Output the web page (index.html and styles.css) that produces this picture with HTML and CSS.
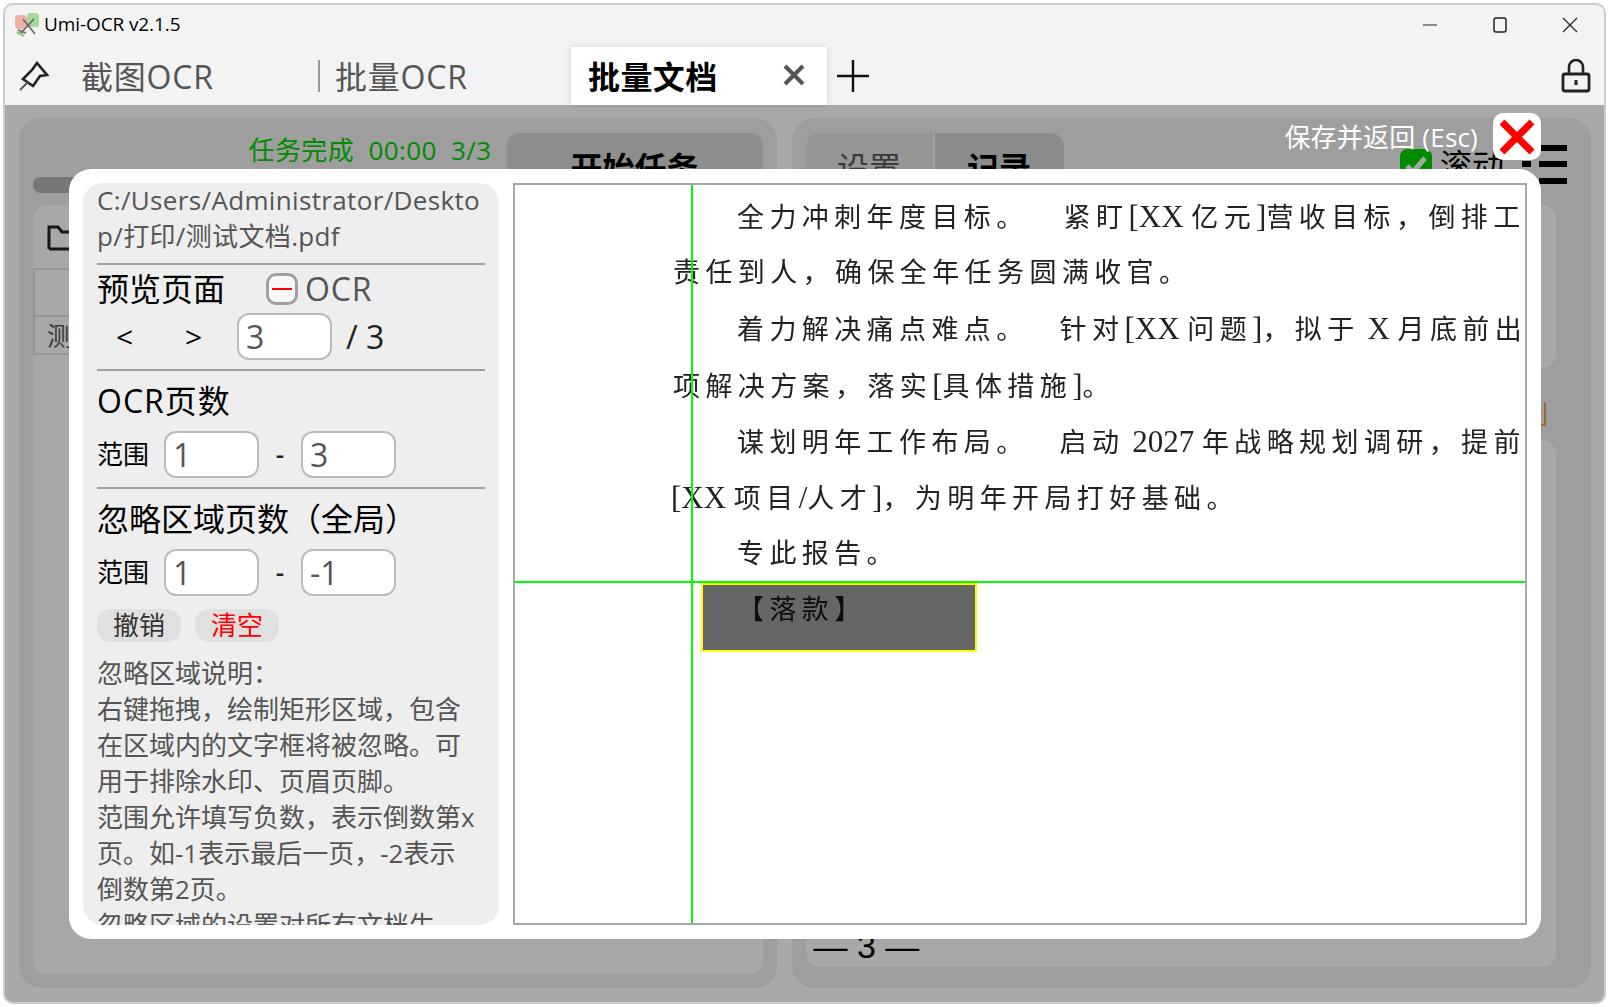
FILE: index.html
```html
<!DOCTYPE html>
<html lang="zh-CN">
<head>
    <meta charset="UTF-8">
    <title>Umi-OCR v2.1.5</title>
    <link rel="stylesheet" href="styles.css">
</head>
<body>
<div class="window">
    <header class="titlebar">
        <svg class="app-icon" viewBox="0 0 24 24">
            <rect x="0" y="2" width="12" height="14" rx="4" fill="#f0b0a8"/>
            <rect x="12" y="0" width="12" height="14" rx="3" fill="#a8d89a"/>
            <path d="M5 21 L19 6 M8 6 L20 21 M3 17 L11 20" stroke="#666" stroke-width="1.6" fill="none"/>
            <path d="M2 19 L9 23" stroke="#8fc87a" stroke-width="2.4"/>
        </svg>
        <span class="app-title">Umi-OCR v2.1.5</span>
        <div class="win-controls">
            <svg viewBox="0 0 16 16"><path d="M1 8 H15" stroke="#222" stroke-width="1.2"/></svg>
            <svg viewBox="0 0 16 16"><rect x="2" y="1" width="12" height="14" rx="2" fill="none" stroke="#222" stroke-width="1.5"/></svg>
            <svg viewBox="0 0 16 16"><path d="M1 1 L15 15 M15 1 L1 15" stroke="#222" stroke-width="1.2"/></svg>
        </div>
    </header>

    <nav class="tabbar">
        <div class="pin">
            <svg viewBox="0 0 30 30"><path d="M18 2 L28 14 L21 15 L14 25 L4 18 L13 9 Z" fill="none" stroke="#222" stroke-width="2.6" stroke-linejoin="miter"/><path d="M9 21 L1 29" stroke="#555" stroke-width="2"/></svg>
        </div>
        <div class="tab tab-first">截图OCR</div>
        <div class="tab tab-second">批量OCR</div>
        <div class="tab tab-active">
            <span>批量文档</span>
            <svg class="tab-close" viewBox="0 0 24 24"><path d="M3 3 L21 21 M21 3 L3 21" stroke="#555" stroke-width="4"/></svg>
        </div>
        <svg class="tab-add" viewBox="0 0 32 32"><path d="M16 0 V32 M0 16 H32" stroke="#111" stroke-width="2.4"/></svg>
        <svg class="lock" viewBox="0 0 30 34"><path d="M8 15 V8 A7 7 0 0 1 22 8 V15" fill="none" stroke="#222" stroke-width="2.6"/><rect x="2" y="15" width="26" height="17" rx="2" fill="none" stroke="#222" stroke-width="2.8"/><rect x="13.5" y="21" width="3" height="5" fill="#222"/></svg>
    </nav>

    <main class="content">
        <section class="panel">
            <div class="task-head">
                <span class="task-status">任务完成&nbsp;&nbsp;00:00&nbsp;&nbsp;3/3</span>
                <div class="start-btn">开始任务</div>
            </div>
            <div class="scroll-pill"></div>
            <div class="file-card">
                <div class="file-head">
                    <svg class="folder" viewBox="0 0 28 26"><path d="M2 24 V2 H11 L15 7 H28 M2 24 H28" fill="none" stroke="#222" stroke-width="3"/></svg>
                </div>
                <div class="file-row"></div>
                <div class="file-row file-row-short">测试文档.pdf</div>
            </div>
        </section>

        <section class="panel panel-right">
            <div class="log-head">
                <div class="seg seg-off">设置</div>
                <div class="seg seg-on">记录</div>
                <div class="log-tools">
                    <svg class="check" viewBox="0 0 32 32"><rect width="32" height="32" rx="7" fill="#00c800"/><path d="M7 17 L13 23 L25 9" fill="none" stroke="#eee" stroke-width="5"/></svg>
                    <span class="scroll-label">滚动</span>
                    <svg class="list-icon" viewBox="0 0 45 39"><path d="M17 3 H45 M0 19 H9 M17 19 H45 M17 36 H45" stroke="#000" stroke-width="6"/></svg>
                </div>
            </div>
            <div class="log-card log-card-top"></div>
            <div class="log-gap"><span class="bracket"></span></div>
            <div class="log-card log-card-main">— 3 —</div>
        </section>
    </main>

    <div class="dim"></div>

    <div class="save-label">保存并返回 (Esc)</div>
    <div class="save-btn">
        <svg viewBox="0 0 36 36"><path d="M3 3 L33 33 M33 3 L3 33" stroke="#f00" stroke-width="7"/></svg>
    </div>

    <div class="modal">
        <aside class="side">
            <div class="path">C:/Users/Administrator/Deskto<br>p/打印/测试文档.pdf</div>
            <hr class="line line-first">
            <div class="side-row preview-head">
                <span class="big">预览页面</span>
                <span class="toggle"><i></i></span>
                <span class="big muted ocr">OCR</span>
            </div>
            <div class="side-row pager">
                <span class="arrow">&lt;</span>
                <span class="arrow arrow-next">&gt;</span>
                <input class="num" value="3">
                <span class="big of">/ 3</span>
            </div>
            <hr class="line">
            <div class="big sect sect-ocr">OCR页数</div>
            <div class="side-row range">
                <span>范围</span>
                <input class="num" value="1">
                <span class="dash">-</span>
                <input class="num" value="3">
            </div>
            <hr class="line">
            <div class="big sect">忽略区域页数（全局）</div>
            <div class="side-row range">
                <span>范围</span>
                <input class="num" value="1">
                <span class="dash">-</span>
                <input class="num" value="-1">
            </div>
            <div class="side-row actions">
                <span class="chip">撤销</span>
                <span class="chip chip-red">清空</span>
            </div>
            <p class="help">忽略区域说明：<br>右键拖拽，绘制矩形区域，包含在区域内的文字框将被忽略。可用于排除水印、页眉页脚。<br>范围允许填写负数，表示倒数第x页。如-1表示最后一页，-2表示倒数第2页。<br>忽略区域的设置对所有文档生效。</p>
        </aside>

        <div class="preview">
            <div class="page">
                <div class="indent">全力冲刺年度目标。<span class="gap gap-wide"></span>紧盯<span class="lat">[XX </span>亿元<span class="lat">]</span>营收目标，倒排工</div>
                <div>责任到人，确保全年任务圆满收官。</div>
                <div class="indent">着力解决痛点难点。<span class="gap"></span>针对<span class="lat">[XX </span>问题<span class="lat">]</span>，拟于<span class="lat"> X </span>月底前出</div>
                <div>项解决方案，落实<span class="lat">[</span>具体措施<span class="lat">]</span>。</div>
                <div class="indent">谋划明年工作布局。<span class="gap"></span>启动<span class="lat"> 2027 </span>年战略规划调研，提前布</div>
                <div class="bracket-line"><span class="lat">[XX </span>项目<span class="lat">/</span>人才<span class="lat">]</span>，为明年开局打好基础。</div>
                <div class="indent">专此报告。</div>
                <div class="indent sign">【落款】</div>
            </div>
            <div class="cross-v"></div>
            <div class="cross-h"></div>
            <div class="ignore-box"></div>
        </div>
    </div>
</div>
</body>
</html>
```

FILE: styles.css
```css
* { box-sizing: border-box; }
body {
    margin: 0;
    height: 1007px;
    background: #fff;
    overflow: hidden;
    font-family: "Open Sans", "Noto Sans CJK SC", sans-serif;
    color: #000;
}
.window {
    position: relative;
    margin: 3px 0 0 3px;
    width: 1603px;
    height: 1001px;
    border: 2px solid #ccc;
    border-radius: 10px;
    background: #f3f3f3;
    overflow: hidden;
    display: flex;
    flex-direction: column;
}

/* title bar */
.titlebar { height: 42px; display: flex; align-items: center; padding: 0 0 2px 10px; flex: none; }
.app-icon { width: 24px; height: 24px; margin-right: 5px; }
.app-title { font-size: 19px; letter-spacing: -0.1px; margin-bottom: 2px; }
.win-controls { margin-left: auto; display: flex; gap: 54px; padding-right: 26px; }
.win-controls svg { width: 16px; height: 16px; display: block; }

/* tabs */
.tabbar { height: 58px; display: flex; align-items: center; flex: none; font-size: 32px; }
.pin { width: 76px; padding-left: 14px; display: flex; }
.pin svg { width: 30px; height: 30px; }
.tab { height: 100%; display: flex; align-items: center; color: #555; padding-bottom: 2px; letter-spacing: 0.8px; }
.tab-first { width: 237px; }
.tab-second { width: 253px; padding-left: 17px; position: relative; }
.tab-second::before {
    content: "";
    position: absolute;
    left: 0;
    top: 13px;
    height: 32px;
    width: 2px;
    background: #999;
}
.tab-active {
    width: 256px;
    padding-left: 17px;
    background: #fff;
    color: #000;
    font-weight: 700;
    letter-spacing: 0.4px;
    box-shadow: 0 0 8px rgba(0, 0, 0, 0.12);
}
.tab-close { width: 24px; height: 24px; margin-left: 64px; }
.tab-add { width: 32px; height: 32px; margin-left: 10px; }
.lock { width: 30px; height: 34px; margin-left: auto; margin-right: 13px; }

/* content behind the dialog */
.content { flex: 1; display: flex; gap: 15px; padding: 13px 13px 14px 14px; min-height: 0; }
.panel {
    width: 758px;
    background: #e2e2e2;
    border-radius: 22px;
    padding: 15px 14px 14px;
    display: flex;
    flex-direction: column;
}
.panel-right { width: 800px; padding-right: 35px; padding-bottom: 21px; }
.task-head { height: 44px; display: flex; justify-content: flex-end; gap: 15px; flex: none; }
.task-status { font-size: 26px; color: #00c800; line-height: 34px; letter-spacing: 0.4px; }
.start-btn {
    width: 256px;
    height: 70px;
    background: #ccc;
    border-radius: 12px 12px 0 0;
    font-size: 32px;
    font-weight: 700;
    text-align: center;
    line-height: 70px;
}
.scroll-pill { height: 16px; width: 200px; background: #aaa; border-radius: 8px; flex: none; }
.file-card { flex: 1; margin-top: 12px; background: #f1f1f1; border-radius: 14px; }
.file-head { height: 63px; padding: 20px 0 0 14px; }
.folder { width: 28px; height: 26px; display: block; }
.file-row { height: 47px; border: 2px solid #d6d6d6; border-bottom: 0; }
.file-row-short { height: 40px; border-bottom: 2px solid #d6d6d6; font-size: 26px; color: #555; padding-left: 12px; line-height: 38px; white-space: nowrap; }
.log-head { height: 72px; display: flex; flex: none; }
.seg { width: 129px; height: 70px; font-size: 32px; text-align: center; line-height: 70px; }
.seg-off { background: #d6d6d6; color: #555; border-radius: 14px 0 0 0; border-right: 2px solid #e8e8e8; }
.seg-on { background: #c8c8c8; font-weight: 700; border-radius: 0 14px 0 0; }
.log-tools { margin-left: auto; margin-right: -11px; display: flex; align-items: flex-start; height: 60px; padding-top: 12px; }
.check { width: 32px; height: 32px; margin-top: 4px; }
.scroll-label { font-size: 32px; margin: 0 22px 0 8px; width: 60px; line-height: 40px; white-space: nowrap; }
.list-icon { width: 45px; height: 39px; }
.log-card { background: #f1f1f1; border-radius: 14px; flex: none; }
.log-card-top { height: 163px; }
.log-gap { height: 72px; display: flex; justify-content: flex-end; flex: none; }
.bracket {
    width: 5px;
    height: 24px;
    margin-top: 34px;
    margin-right: 10px;
    border-right: 2px solid #e09a30;
    border-bottom: 2px solid #e09a30;
}
.log-card-main {
    flex: 1;
    display: flex;
    align-items: flex-end;
    padding: 0 0 1px 8px;
    font-family: "Liberation Sans", sans-serif;
    font-size: 34px;
    line-height: 40px;
}

/* dim layer and dialog */
.dim { position: absolute; left: 0; right: 0; top: 100px; bottom: 0; background: rgba(0, 0, 0, 0.3); }
.save-label { position: absolute; right: 126px; top: 114px; color: #fff; font-size: 26px; line-height: 36px; letter-spacing: 0.2px; white-space: nowrap; }
.save-btn {
    position: absolute;
    left: 1488px;
    top: 108px;
    width: 48px;
    height: 47px;
    background: #fff;
    border-radius: 10px;
    padding: 6px;
    z-index: 2;
}
.save-btn svg { width: 36px; height: 36px; display: block; }
.modal {
    position: absolute;
    left: 64px;
    top: 164px;
    width: 1472px;
    height: 770px;
    background: #fff;
    border-radius: 22px;
    padding: 14px;
    display: flex;
    gap: 14px;
}

/* left column */
.side {
    width: 416px;
    height: 742px;
    flex: none;
    background: #eee;
    border-radius: 20px;
    padding: 0 14px;
    overflow: hidden;
    font-size: 26px;
    line-height: 36px;
}
.path { color: #555; white-space: nowrap; height: 71px; letter-spacing: 0.35px; margin-top: -1px; }
.line { border: 0; height: 2px; background: #a0a0a0; margin: 0; }
.line-first { margin-top: 10px; }
.big { font-size: 32px; line-height: 44px; }
.muted { color: #555; }
.ocr { letter-spacing: 0.8px; margin-left: -2px; }
.side-row { display: flex; align-items: center; }
.preview-head { height: 47px; }
.toggle {
    width: 32px;
    height: 32px;
    margin: 0 9px 0 41px;
    border: 3px solid #a0a0a0;
    border-radius: 10px;
    background: #f8f8f8;
    display: flex;
    align-items: center;
    justify-content: center;
}
.toggle i { width: 20px; height: 2px; background: #f00; }
.pager { height: 57px; padding: 0 0 8px 19px; }
.arrow { width: 69px; font-size: 30px; }
.arrow-next { width: 52px; }
.of { margin-left: 14px; color: #222; }
.num {
    width: 95px;
    height: 47px;
    border: 2px solid #bbb;
    border-radius: 12px;
    background: #fff;
    padding: 0 0 0 7px;
    font: 32px "Open Sans", sans-serif;
    color: #555;
    outline: none;
}
.sect { height: 58px; padding-top: 8px; white-space: nowrap; }
.sect-ocr { letter-spacing: 1px; }
.range { height: 58px; padding-bottom: 8px; }
.range .num { margin-left: 15px; }
.range .num + .dash + .num { margin-left: 0; }
.dash { width: 42px; text-align: center; font-size: 26px; font-weight: 600; color: #222; }
.actions { gap: 14px; height: 34px; margin-top: 3px; }
.chip {
    width: 84px;
    height: 33px;
    border-radius: 14px;
    background: #e0e0e0;
    text-align: center;
    line-height: 33px;
    color: #333;
}
.chip-red { color: #f00; }
.help { margin: 13px 0 0; color: #555; width: 380px; }

/* page preview */
.preview { position: relative; flex: 1; height: 742px; border: 2px solid #a8a8a8; overflow: hidden; background: #fff; }
.page {
    padding: 4px 0 0 158px;
    font-family: "Liberation Serif", "Noto Sans CJK SC", serif;
    font-size: 27px;
    letter-spacing: 5.4px;
    line-height: 56px;
    color: #222;
    white-space: nowrap;
    filter: blur(0.5px);
}
.page > div { height: 56.2px; }
.lat { font-size: 31px; letter-spacing: 0; }
.gap { display: inline-block; width: 31px; }
.gap-wide { width: 35px; }
.indent { padding-left: 64px; }
.bracket-line { margin-left: -2px; }
.cross-v { position: absolute; left: 176px; top: 0; bottom: 0; width: 2px; background: #0f0; }
.cross-h { position: absolute; left: 0; right: 0; top: 396px; height: 2px; background: #0f0; }
.ignore-box {
    position: absolute;
    left: 186px;
    top: 398px;
    width: 276px;
    height: 69px;
    border: 2px solid #ff0;
    background: rgba(0, 0, 0, 0.6);
}
```
